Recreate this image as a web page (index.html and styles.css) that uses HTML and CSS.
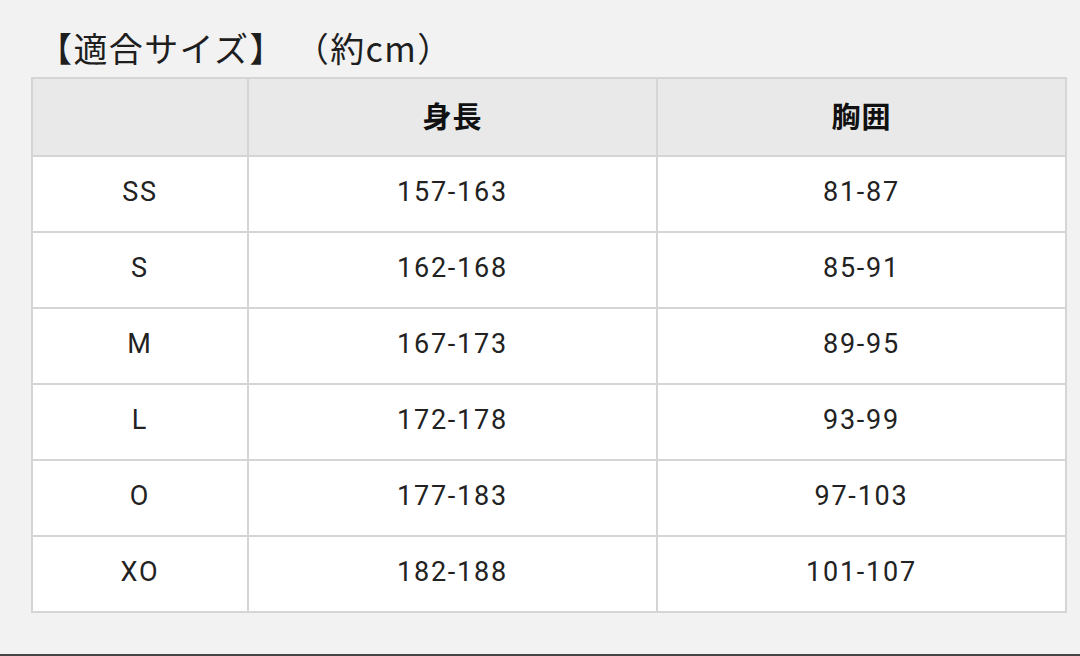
FILE: index.html
```html
<!DOCTYPE html>
<html lang="ja">
<head>
<meta charset="utf-8">
<link rel="stylesheet" href="styles.css">
</head>
<body>
<div class="page">
  <h1 class="title">【適合サイズ】 （約cm）</h1>
  <table class="size-table">
    <colgroup>
      <col class="c-size">
      <col class="c-val">
      <col class="c-val">
    </colgroup>
    <thead>
      <tr><th></th><th>身長</th><th>胸囲</th></tr>
    </thead>
    <tbody>
      <tr><td>SS</td><td>157-163</td><td>81-87</td></tr>
      <tr><td>S</td><td>162-168</td><td>85-91</td></tr>
      <tr><td>M</td><td>167-173</td><td>89-95</td></tr>
      <tr><td>L</td><td>172-178</td><td>93-99</td></tr>
      <tr><td>O</td><td>177-183</td><td>97-103</td></tr>
      <tr><td>XO</td><td>182-188</td><td>101-107</td></tr>
    </tbody>
  </table>
  <div class="spacer"></div>
  <div class="bottom-bar"></div>
</div>
</body>
</html>
```
FILE: styles.css
```css
html, body {
  margin: 0;
  padding: 0;
  background: #f2f2f2;
}
.page {
  width: 1080px;
  height: 656px;
  display: flex;
  flex-direction: column;
  font-family: Roboto, "Noto Sans CJK JP", sans-serif;
  color: #222;
}
.title {
  margin: 0;
  padding: 25px 0 0 38px;
  height: 52px;
  font-family: "Noto Sans CJK JP", sans-serif;
  font-weight: 400;
  font-size: 34px;
  line-height: 46px;
  letter-spacing: 1.4px;
  word-spacing: 1px;
  color: #1e1e1e;
  white-space: pre;
}
.size-table {
  margin-left: 31px;
  width: 1036px;
  border-collapse: collapse;
  table-layout: fixed;
  background: #fff;
}
.c-size { width: 216px; }
.c-val { width: 409px; }
.size-table th,
.size-table td {
  border: 2px solid #d5d5d5;
  height: 70px;
  padding: 0 0 4px 0;
  text-align: center;
  vertical-align: middle;
  font-size: 27px;
  letter-spacing: 1.8px;
}
.size-table th {
  height: 72px;
  padding-bottom: 4px;
  background: #e9e9e9;
  font-family: "Noto Sans CJK JP", sans-serif;
  font-weight: 700;
  font-size: 29px;
  letter-spacing: 1px;
  color: #111;
}
.spacer { flex: 1; }
.bottom-bar {
  height: 2px;
  background: #454545;
}
```
